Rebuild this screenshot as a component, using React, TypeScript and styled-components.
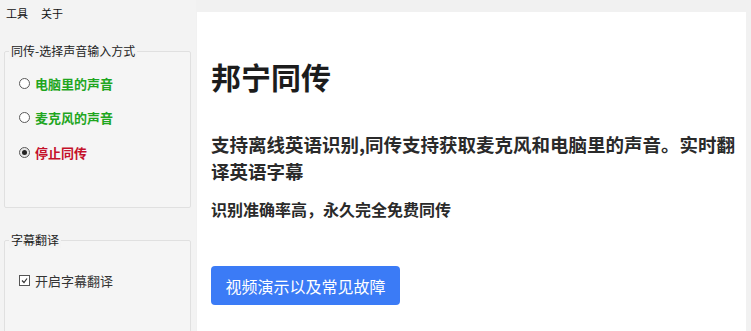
import React from "react";
import styled, { createGlobalStyle } from "styled-components";

const Global = createGlobalStyle`
  html, body { margin: 0; padding: 0; background: #f1f1f1; }
  body { font-family: "Noto Sans CJK SC", "Noto Sans", sans-serif; }
`;

const Window = styled.div`
  display: flex;
  width: 751px;
  height: 331px;
  overflow: hidden;
  background: #f1f1f1;
`;

const Side = styled.div`
  width: 196px;
  flex: none;
  display: flex;
  flex-direction: column;
  background: #f3f3f3;
  overflow: hidden;
`;

const MenuBar = styled.div`
  display: flex;
  flex: none;
  height: 26px;
  align-items: center;
  gap: 13px;
  padding-left: 6px;
  font-size: 11px;
  color: #111;
`;

const MenuItem = styled.span`
  line-height: 26px;
`;

const Group = styled.fieldset<{ $h: number; $mt: number }>`
  flex: none;
  margin: ${(p) => p.$mt}px 0 0 4px;
  padding: 0;
  width: 187px;
  height: ${(p) => p.$h}px;
  box-sizing: border-box;
  border: 1px solid #e0e0e0;
  border-radius: 2px;
  background: #f5f5f5;
  display: flex;
  flex-direction: column;
`;

const Legend = styled.legend`
  margin-left: 4px;
  padding: 0 2px;
  font-size: 12px;
  line-height: 16px;
  color: #222;
  background: #f3f3f3;
`;

const Rows = styled.div<{ $pt: number }>`
  display: flex;
  flex-direction: column;
  gap: 14.5px;
  padding: ${(p) => p.$pt}px 0 0 14px;
`;

const Row = styled.label<{ $color: string; $bold?: boolean }>`
  display: flex;
  align-items: center;
  gap: 5px;
  height: 20px;
  font-size: 13px;
  font-weight: ${(p) => (p.$bold ? 700 : 400)};
  color: ${(p) => p.$color};
`;

const RadioDot = styled.span<{ $on?: boolean }>`
  width: 9px;
  height: 9px;
  border: 1px solid #5a5a5a;
  border-radius: 50%;
  background: ${(p) => (p.$on ? "#e6e6e6" : "#fff")};
  display: flex;
  align-items: center;
  justify-content: center;
  flex: none;
  &::after {
    content: "";
    display: ${(p) => (p.$on ? "block" : "none")};
    width: 5px;
    height: 5px;
    border-radius: 50%;
    background: #222;
  }
`;

const Check = styled.span`
  width: 9px;
  height: 9px;
  border: 1px solid #555;
  background: #fff;
  flex: none;
  display: flex;
  align-items: center;
  justify-content: center;
`;

const Main = styled.div`
  margin: 12px 0 0 1px;
  width: 549px;
  flex: none;
  background: #fff;
  padding: 0 3px 0 14px;
  box-sizing: border-box;
  display: flex;
  flex-direction: column;
  align-items: flex-start;
  color: #222;
`;

const Title = styled.h1`
  margin: 46px 0 0 0;
  font-size: 30px;
  line-height: 36px;
  font-weight: 700;
  color: #1c1c1c;
`;

const Lead = styled.h3`
  margin: 37px 0 0 0;
  font-size: 18.5px;
  line-height: 27px;
  font-weight: 700;
  color: #2a2a2a;
`;

const Note = styled.p`
  margin: 13px 0 0 0;
  font-size: 16px;
  line-height: 22px;
  font-weight: 600;
  color: #2a2a2a;
`;

const Button = styled.button`
  margin-top: 46px;
  width: 189px;
  height: 39px;
  border: none;
  border-radius: 4px;
  background: #3b7bf6;
  color: #fff;
  font-family: "Noto Sans CJK SC", sans-serif;
  font-size: 16px;
  padding: 0;
`;

export default function App() {
  return (
    <>
      <Global />
      <Window>
        <Side>
          <MenuBar>
            <MenuItem>工具</MenuItem>
            <MenuItem>关于</MenuItem>
          </MenuBar>
          <Group $h={165} $mt={17}>
            <Legend>同传-选择声音输入方式</Legend>
            <Rows $pt={14}>
              <Row $color="#1fa61f" $bold>
                <RadioDot />
                电脑里的声音
              </Row>
              <Row $color="#1fa61f" $bold>
                <RadioDot />
                麦克风的声音
              </Row>
              <Row $color="#c4102a" $bold>
                <RadioDot $on />
                停止同传
              </Row>
            </Rows>
          </Group>
          <Group $h={110} $mt={24}>
            <Legend>字幕翻译</Legend>
            <Rows $pt={22}>
              <Row $color="#333">
                <Check>
                  <svg width="7" height="7" viewBox="0 0 7 7">
                    <path d="M1 3.5 L3 5.5 L6 1.5" fill="none" stroke="#333" strokeWidth="1.2" />
                  </svg>
                </Check>
                开启字幕翻译
              </Row>
            </Rows>
          </Group>
        </Side>
        <Main>
          <Title>邦宁同传</Title>
          <Lead>支持离线英语识别,同传支持获取麦克风和电脑里的声音。实时翻译英语字幕</Lead>
          <Note>识别准确率高，永久完全免费同传</Note>
          <Button>视频演示以及常见故障</Button>
        </Main>
      </Window>
    </>
  );
}
